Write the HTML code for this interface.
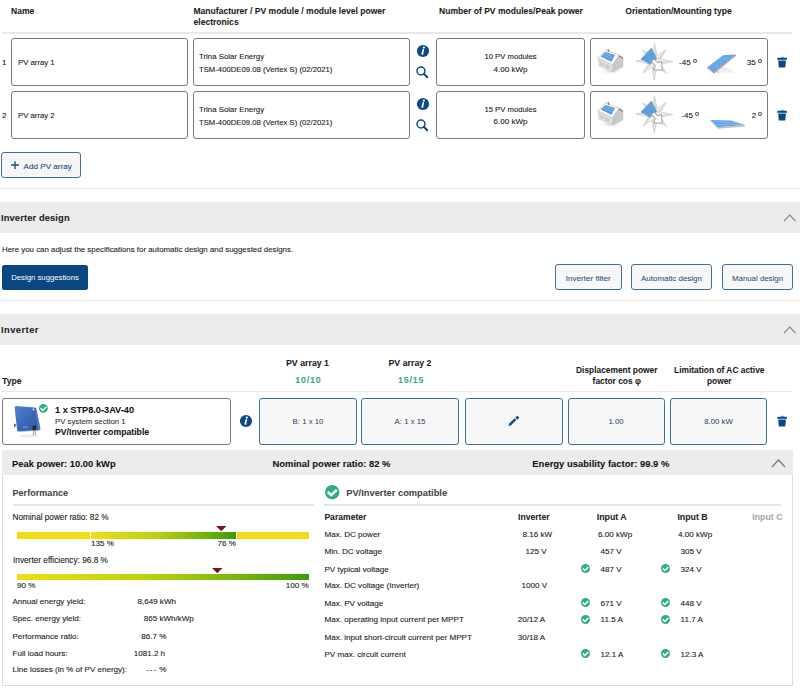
<!DOCTYPE html><html><head><meta charset="utf-8"><style>
html,body{margin:0;padding:0;background:#fff;}
body{width:800px;height:692px;position:relative;overflow:hidden;font-family:"Liberation Sans",sans-serif;}
.t{position:absolute;white-space:nowrap;line-height:1;}
</style></head><body>
<div class="t" style="left:11.00px;top:7.01px;font-size:8.55px;font-weight:700;color:#1a1a1a;-webkit-text-stroke:0.05px currentColor;">Name</div>
<div class="t" style="left:193.50px;top:7.01px;font-size:8.55px;font-weight:700;color:#1a1a1a;-webkit-text-stroke:0.05px currentColor;">Manufacturer / PV module / module level power</div>
<div class="t" style="left:193.50px;top:18.01px;font-size:8.55px;font-weight:700;color:#1a1a1a;-webkit-text-stroke:0.05px currentColor;">electronics</div>
<div class="t" style="left:311.00px;width:400px;text-align:center;top:7.01px;font-size:8.55px;font-weight:700;color:#1a1a1a;-webkit-text-stroke:0.05px currentColor;">Number of PV modules/Peak power</div>
<div class="t" style="left:478.50px;width:400px;text-align:center;top:7.01px;font-size:8.55px;font-weight:700;color:#1a1a1a;-webkit-text-stroke:0.05px currentColor;">Orientation/Mounting type</div>
<div style="position:absolute;left:2px;top:32px;width:790px;height:2px;box-sizing:border-box;background:#e8e8e8;"></div>
<div class="t" style="left:1.90px;top:59.01px;font-size:8px;font-weight:400;color:#1a1a1a;-webkit-text-stroke:0.1px currentColor;">1</div>
<div style="position:absolute;left:11px;top:38px;width:177px;height:48px;box-sizing:border-box;border:1.5px solid #7a7a7a;border-radius:3px;background:#fff;"></div>
<div class="t" style="left:18.00px;top:59.00px;font-size:7.75px;font-weight:400;color:#1a1a1a;-webkit-text-stroke:0.1px currentColor;">PV array 1</div>
<div style="position:absolute;left:193px;top:38px;width:216.5px;height:48px;box-sizing:border-box;border:1.5px solid #7a7a7a;border-radius:3px;background:#fff;"></div>
<div class="t" style="left:199.00px;top:53.01px;font-size:7.85px;font-weight:400;color:#1a1a1a;-webkit-text-stroke:0.1px currentColor;">Trina Solar Energy</div>
<div class="t" style="left:199.00px;top:66.00px;font-size:7.72px;font-weight:400;color:#1a1a1a;-webkit-text-stroke:0.1px currentColor;">TSM-400DE09.08 (Vertex S) (02/2021)</div>
<svg style="position:absolute;left:415px;top:43px" width="16" height="16" viewBox="0 0 16 16"><circle cx="8" cy="8" r="6.1" fill="#0b4a85"/><circle cx="8.85" cy="4.6" r="1.1" fill="#fff"/><path d="M8.3 6.9 L7.35 10.5" stroke="#fff" stroke-width="1.75" stroke-linecap="round"/><path d="M6.6 11.1 H8.4" stroke="#fff" stroke-width="0.9"/></svg>
<svg style="position:absolute;left:414px;top:64px" width="16" height="16" viewBox="0 0 16 16"><circle cx="7" cy="7" r="3.95" fill="none" stroke="#0b4a85" stroke-width="1.5"/><path d="M9.8 9.8 L13.2 13.2" stroke="#0b4a85" stroke-width="2" stroke-linecap="round"/></svg>
<div style="position:absolute;left:436px;top:38px;width:149px;height:48px;box-sizing:border-box;border:1.5px solid #7a7a7a;border-radius:3px;background:#fff;"></div>
<div class="t" style="left:310.50px;width:400px;text-align:center;top:53.01px;font-size:7.7px;font-weight:400;color:#1a1a1a;-webkit-text-stroke:0.1px currentColor;">10 PV modules</div>
<div class="t" style="left:310.50px;width:400px;text-align:center;top:66.01px;font-size:8px;font-weight:400;color:#1a1a1a;-webkit-text-stroke:0.1px currentColor;">4.00 kWp</div>
<div style="position:absolute;left:589.5px;top:38px;width:178.5px;height:48px;box-sizing:border-box;border:1.5px solid #7a7a7a;border-radius:3px;background:#fff;"></div>
<svg style="position:absolute;left:594px;top:44px" width="34" height="32" viewBox="0 0 34 32">
<defs><radialGradient id="hs" cx="0.5" cy="0.5" r="0.5"><stop offset="0" stop-color="#d4d4d4"/><stop offset="1" stop-color="#fff" stop-opacity="0"/></radialGradient></defs>
<ellipse cx="17" cy="27" rx="14" ry="4" fill="url(#hs)"/>
<path d="M4.6 15 L4.8 22 L18.5 27.8 L19.5 20 Z" fill="#e2e2e2" stroke="#bcbcbc" stroke-width="0.45"/>
<path d="M18.5 27.8 L19.5 20 L25.2 11.1 L29 14 L28.7 23.1 Z" fill="#cbcbcb" stroke="#aaa" stroke-width="0.45"/>
<path d="M25.2 11.1 L29.2 13.9 L28.7 15 L24.5 12.5 Z" fill="#8a8a8a"/>
<path d="M3.5 13.9 L11.6 6 L25.2 11.1 L18.5 20.8 Z" fill="#f9f9f9" stroke="#b4b4b4" stroke-width="0.55"/>
<path d="M6.7 12.5 L11.3 7.9 L21 11.1 L17.4 17.8 Z" fill="#5597da"/>
<path d="M8.3 10.9 L18.8 15 M9.9 9.4 L20 13 M9.5 13.5 L13.4 8.6 M12.3 14.6 L16 9.6 M15 15.8 L18.5 10.5" stroke="#a3c9ef" stroke-width="0.45"/>
<path d="M13.6 5 L15.2 5.4 L15.4 8 L13.8 7.6 Z" fill="#7a7a7a"/>
<path d="M6.5 18.5 L9.5 19.6 L9.5 22 L6.5 20.9 Z M11.5 20.4 L15 21.8 L15 24.4 L11.5 23 Z M21.5 21 L24 18 L24 21.5 L21.5 24.5 Z" fill="#d0d0d0" stroke="#b0b0b0" stroke-width="0.35"/>
</svg>
<svg style="position:absolute;left:632px;top:40px" width="44" height="44" viewBox="0 0 44 44">
<path d="M22.60 3.20 L24.91 15.68 L34.30 9.50 L28.32 19.09 L40.70 21.60 L28.32 23.91 L34.60 33.40 L24.91 27.32 L22.20 40.00 L20.09 27.32 L10.80 33.00 L16.68 23.91 L3.80 21.00 L16.68 19.09 L10.50 9.90 L20.09 15.68 Z" fill="#f3f3f3" stroke="#c4c4c4" stroke-width="0.7"/>
<path d="M22.60 3.20 L22.5 21.5 L24.91 15.68 Z M34.30 9.50 L22.5 21.5 L28.32 19.09 Z M40.70 21.60 L22.5 21.5 L28.32 23.91 Z M34.60 33.40 L22.5 21.5 L24.91 27.32 Z M22.20 40.00 L22.5 21.5 L20.09 27.32 Z M10.80 33.00 L22.5 21.5 L16.68 23.91 Z M3.80 21.00 L22.5 21.5 L16.68 19.09 Z M10.50 9.90 L22.5 21.5 L20.09 15.68 Z " fill="#d6d6d6"/>
<path d="M8.9 19.1 L19.4 7.9 L24.8 18.4 L17.8 24.2 Z" fill="#5a9bdc" stroke="#8f9fb3" stroke-width="0.5"/>
<path d="M11 17 L21 10.5 M13 20 L22.5 13.5 M15 22.5 L23.5 16" stroke="#92c0ec" stroke-width="0.4"/>
<path d="M19.4 21.2 L22 19.2 L25.8 22.8 L29.4 21.6 L30.2 30.2 L21.8 30 L23.4 25.6 Z" fill="#ffffff" stroke="#8e8e8e" stroke-width="0.8" stroke-linejoin="round"/>
</svg>
<div class="t" style="left:290.60px;width:400px;text-align:right;top:59.01px;font-size:8px;font-weight:400;color:#1a1a1a;-webkit-text-stroke:0.1px currentColor;">-45</div>
<div style="position:absolute;left:692.70px;top:58.90px;width:4.3px;height:4.2px;box-sizing:border-box;border:0.85px solid #505050;border-radius:50%"></div>
<svg style="position:absolute;left:690px;top:38px" width="80" height="48" viewBox="0 0 80 48">
<defs><linearGradient id="ts" x1="0" y1="0" x2="0" y2="1"><stop offset="0" stop-color="#e6e6e6"/><stop offset="1" stop-color="#f8f8f8"/></linearGradient></defs>
<path d="M24.5 35.6 L33 29 L40 31 L47 35.6 Z" fill="url(#ts)"/>
<path d="M17 29.5 L33 17.2 L45.5 16.5 L23 34.5 Z" fill="#64a4e6"/>
<path d="M19 29.8 L34 18.2 M21 31.5 L39 17.6 M25 27 L30 30.5 M29.5 23.5 L34.5 27 M34 20 L39 23.5" fill="none" stroke="#9ccaf2" stroke-width="0.45"/>
<path d="M23 34.5 L45.5 16.5 L46.2 17.5 L23.8 35.8 Z" fill="#9c9c9c"/>
<path d="M17 29.5 L23 34.5 L23.8 35.8 L16.6 30.2 Z" fill="#c8c8c8"/>
<path d="M27.5 32 L28.8 35.6" stroke="#aaa" stroke-width="0.7"/>
</svg>
<div class="t" style="left:355.60px;width:400px;text-align:right;top:59.01px;font-size:8px;font-weight:400;color:#1a1a1a;-webkit-text-stroke:0.1px currentColor;">35</div>
<div style="position:absolute;left:757.80px;top:58.90px;width:4.3px;height:4.2px;box-sizing:border-box;border:0.85px solid #505050;border-radius:50%"></div>
<svg style="position:absolute;left:776.5px;top:56px" width="11" height="13" viewBox="0 0 11 13"><path d="M3.2 1.6 Q5.5 -0.3 7.8 1.6 Z" fill="#0b4a85"/><rect x="0.3" y="1.8" width="9.6" height="2" fill="#0b4a85"/><path d="M1.2 4.6 H8.9 L8.3 11.6 H1.8 Z" fill="#0b4a85"/></svg>
<div class="t" style="left:1.90px;top:112.01px;font-size:8px;font-weight:400;color:#1a1a1a;-webkit-text-stroke:0.1px currentColor;">2</div>
<div style="position:absolute;left:11px;top:91px;width:177px;height:48px;box-sizing:border-box;border:1.5px solid #7a7a7a;border-radius:3px;background:#fff;"></div>
<div class="t" style="left:18.00px;top:112.00px;font-size:7.75px;font-weight:400;color:#1a1a1a;-webkit-text-stroke:0.1px currentColor;">PV array 2</div>
<div style="position:absolute;left:193px;top:91px;width:216.5px;height:48px;box-sizing:border-box;border:1.5px solid #7a7a7a;border-radius:3px;background:#fff;"></div>
<div class="t" style="left:199.00px;top:106.01px;font-size:7.85px;font-weight:400;color:#1a1a1a;-webkit-text-stroke:0.1px currentColor;">Trina Solar Energy</div>
<div class="t" style="left:199.00px;top:119.00px;font-size:7.72px;font-weight:400;color:#1a1a1a;-webkit-text-stroke:0.1px currentColor;">TSM-400DE09.08 (Vertex S) (02/2021)</div>
<svg style="position:absolute;left:415px;top:96px" width="16" height="16" viewBox="0 0 16 16"><circle cx="8" cy="8" r="6.1" fill="#0b4a85"/><circle cx="8.85" cy="4.6" r="1.1" fill="#fff"/><path d="M8.3 6.9 L7.35 10.5" stroke="#fff" stroke-width="1.75" stroke-linecap="round"/><path d="M6.6 11.1 H8.4" stroke="#fff" stroke-width="0.9"/></svg>
<svg style="position:absolute;left:414px;top:117px" width="16" height="16" viewBox="0 0 16 16"><circle cx="7" cy="7" r="3.95" fill="none" stroke="#0b4a85" stroke-width="1.5"/><path d="M9.8 9.8 L13.2 13.2" stroke="#0b4a85" stroke-width="2" stroke-linecap="round"/></svg>
<div style="position:absolute;left:436px;top:91px;width:149px;height:48px;box-sizing:border-box;border:1.5px solid #7a7a7a;border-radius:3px;background:#fff;"></div>
<div class="t" style="left:310.50px;width:400px;text-align:center;top:106.01px;font-size:7.7px;font-weight:400;color:#1a1a1a;-webkit-text-stroke:0.1px currentColor;">15 PV modules</div>
<div class="t" style="left:310.50px;width:400px;text-align:center;top:118.01px;font-size:8px;font-weight:400;color:#1a1a1a;-webkit-text-stroke:0.1px currentColor;">6.00 kWp</div>
<div style="position:absolute;left:589.5px;top:91px;width:178.5px;height:48px;box-sizing:border-box;border:1.5px solid #7a7a7a;border-radius:3px;background:#fff;"></div>
<svg style="position:absolute;left:594px;top:97px" width="34" height="32" viewBox="0 0 34 32">
<defs><radialGradient id="hs" cx="0.5" cy="0.5" r="0.5"><stop offset="0" stop-color="#d4d4d4"/><stop offset="1" stop-color="#fff" stop-opacity="0"/></radialGradient></defs>
<ellipse cx="17" cy="27" rx="14" ry="4" fill="url(#hs)"/>
<path d="M4.6 15 L4.8 22 L18.5 27.8 L19.5 20 Z" fill="#e2e2e2" stroke="#bcbcbc" stroke-width="0.45"/>
<path d="M18.5 27.8 L19.5 20 L25.2 11.1 L29 14 L28.7 23.1 Z" fill="#cbcbcb" stroke="#aaa" stroke-width="0.45"/>
<path d="M25.2 11.1 L29.2 13.9 L28.7 15 L24.5 12.5 Z" fill="#8a8a8a"/>
<path d="M3.5 13.9 L11.6 6 L25.2 11.1 L18.5 20.8 Z" fill="#f9f9f9" stroke="#b4b4b4" stroke-width="0.55"/>
<path d="M6.7 12.5 L11.3 7.9 L21 11.1 L17.4 17.8 Z" fill="#5597da"/>
<path d="M8.3 10.9 L18.8 15 M9.9 9.4 L20 13 M9.5 13.5 L13.4 8.6 M12.3 14.6 L16 9.6 M15 15.8 L18.5 10.5" stroke="#a3c9ef" stroke-width="0.45"/>
<path d="M13.6 5 L15.2 5.4 L15.4 8 L13.8 7.6 Z" fill="#7a7a7a"/>
<path d="M6.5 18.5 L9.5 19.6 L9.5 22 L6.5 20.9 Z M11.5 20.4 L15 21.8 L15 24.4 L11.5 23 Z M21.5 21 L24 18 L24 21.5 L21.5 24.5 Z" fill="#d0d0d0" stroke="#b0b0b0" stroke-width="0.35"/>
</svg>
<svg style="position:absolute;left:632px;top:93px" width="44" height="44" viewBox="0 0 44 44">
<path d="M22.60 3.20 L24.91 15.68 L34.30 9.50 L28.32 19.09 L40.70 21.60 L28.32 23.91 L34.60 33.40 L24.91 27.32 L22.20 40.00 L20.09 27.32 L10.80 33.00 L16.68 23.91 L3.80 21.00 L16.68 19.09 L10.50 9.90 L20.09 15.68 Z" fill="#f3f3f3" stroke="#c4c4c4" stroke-width="0.7"/>
<path d="M22.60 3.20 L22.5 21.5 L24.91 15.68 Z M34.30 9.50 L22.5 21.5 L28.32 19.09 Z M40.70 21.60 L22.5 21.5 L28.32 23.91 Z M34.60 33.40 L22.5 21.5 L24.91 27.32 Z M22.20 40.00 L22.5 21.5 L20.09 27.32 Z M10.80 33.00 L22.5 21.5 L16.68 23.91 Z M3.80 21.00 L22.5 21.5 L16.68 19.09 Z M10.50 9.90 L22.5 21.5 L20.09 15.68 Z " fill="#d6d6d6"/>
<path d="M8.9 19.1 L19.4 7.9 L24.8 18.4 L17.8 24.2 Z" fill="#5a9bdc" stroke="#8f9fb3" stroke-width="0.5"/>
<path d="M11 17 L21 10.5 M13 20 L22.5 13.5 M15 22.5 L23.5 16" stroke="#92c0ec" stroke-width="0.4"/>
<path d="M19.4 21.2 L22 19.2 L25.8 22.8 L29.4 21.6 L30.2 30.2 L21.8 30 L23.4 25.6 Z" fill="#ffffff" stroke="#8e8e8e" stroke-width="0.8" stroke-linejoin="round"/>
</svg>
<div class="t" style="left:292.90px;width:400px;text-align:right;top:112.01px;font-size:8px;font-weight:400;color:#1a1a1a;-webkit-text-stroke:0.1px currentColor;">-45</div>
<div style="position:absolute;left:695.00px;top:112.10px;width:4.3px;height:4.2px;box-sizing:border-box;border:0.85px solid #505050;border-radius:50%"></div>
<svg style="position:absolute;left:690px;top:90px" width="80" height="50" viewBox="0 0 80 50">
<path d="M20.5 30 L41 30.5 L55 35 L27 37.2 Z" fill="#64a4e6"/>
<path d="M27 37.2 L55 35 L54.6 36.4 L27.6 38.8 Z" fill="#bcbcbc"/>
<path d="M20.5 30 L27 37.2 L27.6 38.8 L20 31 Z" fill="#d2d2d2"/>
<path d="M22.5 31.5 L49 33.2 M25 34.5 L52 34.6" stroke="#a3cdf3" stroke-width="0.45"/>
</svg>
<div class="t" style="left:356.10px;width:400px;text-align:right;top:112.01px;font-size:8px;font-weight:400;color:#1a1a1a;-webkit-text-stroke:0.1px currentColor;">2</div>
<div style="position:absolute;left:757.60px;top:112.10px;width:4.3px;height:4.2px;box-sizing:border-box;border:0.85px solid #505050;border-radius:50%"></div>
<svg style="position:absolute;left:776.5px;top:109px" width="11" height="13" viewBox="0 0 11 13"><path d="M3.2 1.6 Q5.5 -0.3 7.8 1.6 Z" fill="#0b4a85"/><rect x="0.3" y="1.8" width="9.6" height="2" fill="#0b4a85"/><path d="M1.2 4.6 H8.9 L8.3 11.6 H1.8 Z" fill="#0b4a85"/></svg>
<div style="position:absolute;left:1.4px;top:152.2px;width:79.6px;height:25.80000000000001px;box-sizing:border-box;border:1.5px solid #3f6f9c;border-radius:3px;background:#f6f6f7;"></div>
<svg style="position:absolute;left:10px;top:160px" width="10" height="10" viewBox="0 0 10 10"><path d="M5 1.2 V9 M1.2 5 H9" stroke="#1d4f84" stroke-width="1.4"/></svg>
<div class="t" style="left:23.60px;top:163.00px;font-size:8.1px;font-weight:400;color:#1f4675;-webkit-text-stroke:0.1px currentColor;">Add PV array</div>
<div style="position:absolute;left:0px;top:187.5px;width:800px;height:1.5px;box-sizing:border-box;background:#e8e8e8;"></div>
<div style="position:absolute;left:0px;top:202px;width:800px;height:31px;box-sizing:border-box;background:#ececec;"></div>
<div class="t" style="left:1.00px;top:213.01px;font-size:9.4px;font-weight:700;color:#222;-webkit-text-stroke:0.05px currentColor;letter-spacing:0.1px;">Inverter design</div>
<svg style="position:absolute;left:782.5px;top:213.6px" width="13.5" height="8.2" viewBox="0 0 13.5 8.2"><path d="M1 7.2 L6.75 1 L12.5 7.2" fill="none" stroke="#777" stroke-width="1.05"/></svg>
<div class="t" style="left:2.00px;top:246.00px;font-size:7.88px;font-weight:400;color:#222;-webkit-text-stroke:0.1px currentColor;">Here you can adjust the specifications for automatic design and suggested designs.</div>
<div style="position:absolute;left:2px;top:264.5px;width:86px;height:25.0px;box-sizing:border-box;background:#0a467f;border-radius:2.5px;"></div>
<div class="t" style="left:-155.00px;width:400px;text-align:center;top:274.01px;font-size:7.76px;font-weight:400;color:#fff;-webkit-text-stroke:0px currentColor;">Design suggestions</div>
<div style="position:absolute;left:555px;top:264px;width:66.5px;height:26px;box-sizing:border-box;border:1.5px solid #3f6f9c;border-radius:3px;background:#f7f7f8;"></div>
<div class="t" style="left:388.25px;width:400px;text-align:center;top:275.00px;font-size:8.1px;font-weight:400;color:#27507f;-webkit-text-stroke:0.06px currentColor;">Inverter filter</div>
<div style="position:absolute;left:631px;top:264px;width:81px;height:26px;box-sizing:border-box;border:1.5px solid #3f6f9c;border-radius:3px;background:#f7f7f8;"></div>
<div class="t" style="left:471.50px;width:400px;text-align:center;top:275.00px;font-size:7.95px;font-weight:400;color:#27507f;-webkit-text-stroke:0.06px currentColor;">Automatic design</div>
<div style="position:absolute;left:722px;top:264px;width:71px;height:26px;box-sizing:border-box;border:1.5px solid #3f6f9c;border-radius:3px;background:#f7f7f8;"></div>
<div class="t" style="left:557.50px;width:400px;text-align:center;top:275.01px;font-size:7.85px;font-weight:400;color:#27507f;-webkit-text-stroke:0.06px currentColor;">Manual design</div>
<div style="position:absolute;left:0px;top:299.5px;width:800px;height:1.5px;box-sizing:border-box;background:#e8e8e8;"></div>
<div style="position:absolute;left:0px;top:314px;width:800px;height:31px;box-sizing:border-box;background:#ececec;"></div>
<div class="t" style="left:1.00px;top:325.01px;font-size:9.4px;font-weight:700;color:#222;-webkit-text-stroke:0.05px currentColor;letter-spacing:0.44px;">Inverter</div>
<svg style="position:absolute;left:782.5px;top:325.6px" width="13.5" height="8.2" viewBox="0 0 13.5 8.2"><path d="M1 7.2 L6.75 1 L12.5 7.2" fill="none" stroke="#777" stroke-width="1.05"/></svg>
<div class="t" style="left:2.00px;top:377.01px;font-size:8.7px;font-weight:700;color:#1a1a1a;-webkit-text-stroke:0.05px currentColor;">Type</div>
<div class="t" style="left:107.50px;width:400px;text-align:center;top:359.00px;font-size:8.8px;font-weight:700;color:#1a1a1a;-webkit-text-stroke:0.05px currentColor;">PV array 1</div>
<div class="t" style="left:108.30px;width:400px;text-align:center;top:376.00px;font-size:8.8px;font-weight:700;color:#3aaa8c;-webkit-text-stroke:0.05px currentColor;letter-spacing:0.86px;">10/10</div>
<div class="t" style="left:210.00px;width:400px;text-align:center;top:359.00px;font-size:8.8px;font-weight:700;color:#1a1a1a;-webkit-text-stroke:0.05px currentColor;">PV array 2</div>
<div class="t" style="left:211.20px;width:400px;text-align:center;top:376.00px;font-size:8.8px;font-weight:700;color:#3aaa8c;-webkit-text-stroke:0.05px currentColor;letter-spacing:0.86px;">15/15</div>
<div class="t" style="left:416.80px;width:400px;text-align:center;top:366.01px;font-size:8.4px;font-weight:700;color:#1a1a1a;-webkit-text-stroke:0.05px currentColor;">Displacement power</div>
<div class="t" style="left:416.80px;width:400px;text-align:center;top:377.01px;font-size:8.4px;font-weight:700;color:#1a1a1a;-webkit-text-stroke:0.05px currentColor;">factor cos φ</div>
<div class="t" style="left:519.30px;width:400px;text-align:center;top:366.01px;font-size:8.4px;font-weight:700;color:#1a1a1a;-webkit-text-stroke:0.05px currentColor;">Limitation of AC active</div>
<div class="t" style="left:519.30px;width:400px;text-align:center;top:377.01px;font-size:8.4px;font-weight:700;color:#1a1a1a;-webkit-text-stroke:0.05px currentColor;">power</div>
<div style="position:absolute;left:2px;top:390.5px;width:791px;height:1.5px;box-sizing:border-box;background:#e8e8e8;"></div>
<div style="position:absolute;left:2px;top:397.5px;width:229px;height:47.5px;box-sizing:border-box;border:1.5px solid #7a7a7a;border-radius:3px;background:#fff;"></div>
<svg style="position:absolute;left:12.5px;top:405px" width="30" height="34" viewBox="0 0 30 34">
<defs><linearGradient id="ig" x1="0" y1="0" x2="1" y2="1"><stop offset="0" stop-color="#5283d2"/><stop offset="0.5" stop-color="#3c68b8"/><stop offset="1" stop-color="#2f5aa6"/></linearGradient></defs>
<ellipse cx="16" cy="31" rx="10" ry="1.4" fill="#ececec"/>
<path d="M1.6 2.6 Q1.6 0.9 3.4 1 L21.6 2.4 Q23.2 2.6 23.5 4.2 L27.3 23.6 Q27.6 25.1 26 25.3 L5.8 26.5 Q4.3 26.6 4.1 25 Z" fill="url(#ig)"/>
<path d="M23.5 4.2 L27.3 23.6 Q27.6 25.1 26 25.3 L25.2 25.3 L22.4 4 Z" fill="#5d8ad6" opacity="0.7"/>
<path d="M4.1 25 L5.8 26.5 L26 25.3" fill="none" stroke="#8fb0e6" stroke-width="0.6"/>
<rect x="19.6" y="20.6" width="3.4" height="4.6" fill="#2a2a2a"/>
<path d="M20.6 25 L20.4 30.5 M22 25 L22.6 30" stroke="#777" stroke-width="0.7"/>
<rect x="1.2" y="18.8" width="1.3" height="3" fill="#2a2a2a"/>
<rect x="10" y="21.6" width="4.5" height="1" fill="#8aa6d8"/>
<circle cx="20.5" cy="4.6" r="1" fill="#d5e2f5"/>
</svg>
<svg style="position:absolute;left:37.6px;top:402.90000000000003px" width="10.8" height="10.8" viewBox="0 0 10.8 10.8"><circle cx="5.4" cy="5.4" r="4.4" fill="#2fae82"/><path d="M2.6500000000000004 5.277777777777779 L4.78888888888889 7.233333333333334 L8.211111111111112 3.9333333333333336" fill="none" stroke="#fff" stroke-width="1.4666666666666668"/></svg>
<div class="t" style="left:55.00px;top:406.01px;font-size:9.2px;font-weight:700;color:#111;-webkit-text-stroke:0.05px currentColor;">1 x STP8.0-3AV-40</div>
<div class="t" style="left:55.00px;top:418.01px;font-size:7.8px;font-weight:400;color:#333;-webkit-text-stroke:0.1px currentColor;">PV system section 1</div>
<div class="t" style="left:55.00px;top:428.01px;font-size:8.7px;font-weight:700;color:#111;-webkit-text-stroke:0.05px currentColor;">PV/Inverter compatible</div>
<svg style="position:absolute;left:237.6px;top:413.2px" width="16" height="16" viewBox="0 0 16 16"><circle cx="8" cy="8" r="6.1" fill="#0b4a85"/><circle cx="8.85" cy="4.6" r="1.1" fill="#fff"/><path d="M8.3 6.9 L7.35 10.5" stroke="#fff" stroke-width="1.75" stroke-linecap="round"/><path d="M6.6 11.1 H8.4" stroke="#fff" stroke-width="0.9"/></svg>
<div style="position:absolute;left:259px;top:397.5px;width:98px;height:47.0px;box-sizing:border-box;border:1.5px solid #3f6f9c;border-radius:3px;background:#f7f7f8;"></div>
<div class="t" style="left:108.00px;width:400px;text-align:center;top:418.01px;font-size:7.8px;font-weight:400;color:#27466b;-webkit-text-stroke:0.03px currentColor;">B: 1 x 10</div>
<div style="position:absolute;left:361px;top:397.5px;width:98px;height:47.0px;box-sizing:border-box;border:1.5px solid #3f6f9c;border-radius:3px;background:#f7f7f8;"></div>
<div class="t" style="left:210.00px;width:400px;text-align:center;top:418.01px;font-size:7.8px;font-weight:400;color:#27466b;-webkit-text-stroke:0.03px currentColor;">A: 1 x 15</div>
<div style="position:absolute;left:465px;top:397.5px;width:97.5px;height:47.0px;box-sizing:border-box;border:1.5px solid #3f6f9c;border-radius:3px;background:#f7f7f8;"></div>
<div style="position:absolute;left:567.5px;top:397.5px;width:97.0px;height:47.0px;box-sizing:border-box;border:1.5px solid #3f6f9c;border-radius:3px;background:#f7f7f8;"></div>
<div class="t" style="left:416.00px;width:400px;text-align:center;top:418.01px;font-size:7.8px;font-weight:400;color:#27466b;-webkit-text-stroke:0.03px currentColor;">1.00</div>
<div style="position:absolute;left:670px;top:397.5px;width:97px;height:47.0px;box-sizing:border-box;border:1.5px solid #3f6f9c;border-radius:3px;background:#f7f7f8;"></div>
<div class="t" style="left:518.50px;width:400px;text-align:center;top:418.01px;font-size:7.8px;font-weight:400;color:#27466b;-webkit-text-stroke:0.03px currentColor;">8.00 kW</div>
<svg style="position:absolute;left:506px;top:413px" width="16" height="16" viewBox="0 0 16 16"><path d="M2.6 13 L3.3 10.6 L8.6 5.3 L10.3 7 L5 12.3 Z" fill="#0b4a85"/><path d="M9.3 4.6 L10.6 3.3 Q11.3 2.7 11.9 3.3 L12.7 4.1 Q13.3 4.7 12.7 5.4 L11.4 6.7 Z" fill="#0b4a85"/></svg>
<svg style="position:absolute;left:776.8px;top:415px" width="11" height="13" viewBox="0 0 11 13"><path d="M3.2 1.6 Q5.5 -0.3 7.8 1.6 Z" fill="#0b4a85"/><rect x="0.3" y="1.8" width="9.6" height="2" fill="#0b4a85"/><path d="M1.2 4.6 H8.9 L8.3 11.6 H1.8 Z" fill="#0b4a85"/></svg>
<div style="position:absolute;left:2px;top:474px;width:790.5px;height:211.5px;box-sizing:border-box;border:1px solid #dedede;border-top:none;background:#fff;"></div>
<div style="position:absolute;left:2px;top:450px;width:790.5px;height:24.5px;box-sizing:border-box;background:#ececec;"></div>
<div class="t" style="left:12.00px;top:459.01px;font-size:9.4px;font-weight:700;color:#111;-webkit-text-stroke:0.05px currentColor;">Peak power: 10.00 kWp</div>
<div class="t" style="left:272.50px;top:459.00px;font-size:9.45px;font-weight:700;color:#111;-webkit-text-stroke:0.05px currentColor;">Nominal power ratio: 82 %</div>
<div class="t" style="left:532.30px;top:459.01px;font-size:9.46px;font-weight:700;color:#111;-webkit-text-stroke:0.05px currentColor;">Energy usability factor: 99.9 %</div>
<svg style="position:absolute;left:770.5px;top:458.5px" width="15" height="9" viewBox="0 0 15 9"><path d="M1 8 L7.5 1 L14 8" fill="none" stroke="#777" stroke-width="1.2"/></svg>
<div class="t" style="left:12.50px;top:489.00px;font-size:9.1px;font-weight:700;color:#444;-webkit-text-stroke:0.05px currentColor;">Performance</div>
<div style="position:absolute;left:12.5px;top:503.5px;width:301.5px;height:2.0px;box-sizing:border-box;background:#e4e4e4;"></div>
<div class="t" style="left:12.50px;top:514.01px;font-size:8.2px;font-weight:400;color:#1a1a1a;-webkit-text-stroke:0.1px currentColor;">Nominal power ratio: 82 %</div>
<div style="position:absolute;left:17px;top:532.4px;width:72.6px;height:6.399999999999977px;box-sizing:border-box;background:#f2dd14;"></div>
<div style="position:absolute;left:91px;top:532.4px;width:145px;height:6.399999999999977px;box-sizing:border-box;background:linear-gradient(90deg,#efe012 0%,#b9d20f 45%,#6db30c 80%,#3e9a0a 100%);"></div>
<div style="position:absolute;left:237px;top:532.4px;width:71.80000000000001px;height:6.399999999999977px;box-sizing:border-box;background:#f2dd14;"></div>
<svg style="position:absolute;left:216px;top:526px" width="11" height="6" viewBox="0 0 11 6"><path d="M0 0 H10.5 L5.25 5.2 Z" fill="#7b1518"/></svg>
<div class="t" style="left:91.00px;top:540.00px;font-size:8.1px;font-weight:400;color:#1a1a1a;-webkit-text-stroke:0.1px currentColor;">135 %</div>
<div class="t" style="left:-164.00px;width:400px;text-align:right;top:540.00px;font-size:8.1px;font-weight:400;color:#1a1a1a;-webkit-text-stroke:0.1px currentColor;">76 %</div>
<div class="t" style="left:13.00px;top:557.00px;font-size:8.27px;font-weight:400;color:#1a1a1a;-webkit-text-stroke:0.1px currentColor;">Inverter efficiency: 96.8 %</div>
<div style="position:absolute;left:17px;top:573.6px;width:291.8px;height:6.399999999999977px;box-sizing:border-box;background:linear-gradient(90deg,#efe012 0%,#b9d20f 45%,#6db30c 80%,#3e9a0a 100%);"></div>
<svg style="position:absolute;left:212px;top:567.6px" width="11" height="6" viewBox="0 0 11 6"><path d="M0 0 H10.5 L5.25 5.2 Z" fill="#7b1518"/></svg>
<div class="t" style="left:17.00px;top:582.00px;font-size:8.1px;font-weight:400;color:#1a1a1a;-webkit-text-stroke:0.1px currentColor;">90 %</div>
<div class="t" style="left:-91.20px;width:400px;text-align:right;top:582.00px;font-size:8.1px;font-weight:400;color:#1a1a1a;-webkit-text-stroke:0.1px currentColor;">100 %</div>
<div class="t" style="left:12.50px;top:598.00px;font-size:8.05px;font-weight:400;color:#1a1a1a;-webkit-text-stroke:0.1px currentColor;">Annual energy yield:</div>
<div class="t" style="left:137.50px;top:598.00px;font-size:8.05px;font-weight:400;color:#1a1a1a;-webkit-text-stroke:0.1px currentColor;">8,649 kWh</div>
<div class="t" style="left:12.50px;top:615.00px;font-size:8.05px;font-weight:400;color:#1a1a1a;-webkit-text-stroke:0.1px currentColor;">Spec. energy yield:</div>
<div class="t" style="left:143.75px;top:615.00px;font-size:8.05px;font-weight:400;color:#1a1a1a;-webkit-text-stroke:0.1px currentColor;">865 kWh/kWp</div>
<div class="t" style="left:12.50px;top:633.00px;font-size:8.05px;font-weight:400;color:#1a1a1a;-webkit-text-stroke:0.1px currentColor;">Performance ratio:</div>
<div class="t" style="left:141.25px;top:633.00px;font-size:8.05px;font-weight:400;color:#1a1a1a;-webkit-text-stroke:0.1px currentColor;">86.7 %</div>
<div class="t" style="left:12.50px;top:650.00px;font-size:8.05px;font-weight:400;color:#1a1a1a;-webkit-text-stroke:0.1px currentColor;">Full load hours:</div>
<div class="t" style="left:133.75px;top:650.00px;font-size:8.05px;font-weight:400;color:#1a1a1a;-webkit-text-stroke:0.1px currentColor;">1081.2 h</div>
<div class="t" style="left:12.50px;top:666.00px;font-size:8.05px;font-weight:400;color:#1a1a1a;-webkit-text-stroke:0.1px currentColor;">Line losses (in % of PV energy):</div>
<div class="t" style="left:146.25px;top:666.00px;font-size:8.05px;font-weight:400;color:#1a1a1a;-webkit-text-stroke:0.1px currentColor;"><span style="letter-spacing:0.9px">---</span> %</div>
<svg style="position:absolute;left:323.8px;top:484.3px" width="16.4" height="16.4" viewBox="0 0 16.4 16.4"><circle cx="8.2" cy="8.2" r="7.2" fill="#2fae82"/><path d="M3.6999999999999993 7.999999999999999 L7.199999999999999 11.2 L12.799999999999999 5.799999999999999" fill="none" stroke="#fff" stroke-width="2.4"/></svg>
<div class="t" style="left:346.20px;top:489.00px;font-size:9.32px;font-weight:700;color:#444;-webkit-text-stroke:0.05px currentColor;">PV/Inverter compatible</div>
<div style="position:absolute;left:323.6px;top:503.5px;width:457.4px;height:2.0px;box-sizing:border-box;background:#e4e4e4;"></div>
<div class="t" style="left:324.40px;top:513.00px;font-size:8.6px;font-weight:700;color:#222;-webkit-text-stroke:0.05px currentColor;">Parameter</div>
<div class="t" style="left:518.00px;top:513.00px;font-size:8.6px;font-weight:700;color:#222;-webkit-text-stroke:0.05px currentColor;">Inverter</div>
<div class="t" style="left:596.70px;top:513.00px;font-size:8.8px;font-weight:700;color:#222;-webkit-text-stroke:0.05px currentColor;">Input A</div>
<div class="t" style="left:677.40px;top:513.00px;font-size:8.8px;font-weight:700;color:#222;-webkit-text-stroke:0.05px currentColor;">Input B</div>
<div class="t" style="left:752.30px;top:513.00px;font-size:8.8px;font-weight:700;color:#aaa;-webkit-text-stroke:0.05px currentColor;">Input C</div>
<div class="t" style="left:324.40px;top:531.00px;font-size:8.1px;font-weight:400;color:#1a1a1a;-webkit-text-stroke:0.1px currentColor;">Max. DC power</div>
<div class="t" style="left:522.50px;top:531.00px;font-size:8.1px;font-weight:400;color:#1a1a1a;-webkit-text-stroke:0.1px currentColor;">8.16 kW</div>
<div class="t" style="left:598.00px;top:531.00px;font-size:8.1px;font-weight:400;color:#1a1a1a;-webkit-text-stroke:0.1px currentColor;">6.00 kWp</div>
<div class="t" style="left:678.00px;top:531.00px;font-size:8.1px;font-weight:400;color:#1a1a1a;-webkit-text-stroke:0.1px currentColor;">4.00 kWp</div>
<div class="t" style="left:324.40px;top:548.00px;font-size:8.1px;font-weight:400;color:#1a1a1a;-webkit-text-stroke:0.1px currentColor;">Min. DC voltage</div>
<div class="t" style="left:525.50px;top:548.00px;font-size:8.1px;font-weight:400;color:#1a1a1a;-webkit-text-stroke:0.1px currentColor;">125 V</div>
<div class="t" style="left:600.50px;top:548.00px;font-size:8.1px;font-weight:400;color:#1a1a1a;-webkit-text-stroke:0.1px currentColor;">457 V</div>
<div class="t" style="left:680.50px;top:548.00px;font-size:8.1px;font-weight:400;color:#1a1a1a;-webkit-text-stroke:0.1px currentColor;">305 V</div>
<div class="t" style="left:324.40px;top:566.00px;font-size:8.1px;font-weight:400;color:#1a1a1a;-webkit-text-stroke:0.1px currentColor;">PV typical voltage</div>
<div class="t" style="left:600.50px;top:566.00px;font-size:8.1px;font-weight:400;color:#1a1a1a;-webkit-text-stroke:0.1px currentColor;">487 V</div>
<svg style="position:absolute;left:580.0px;top:563.0px" width="11.0" height="11.0" viewBox="0 0 11.0 11.0"><circle cx="5.5" cy="5.5" r="4.5" fill="#2fae82"/><path d="M2.6875 5.375 L4.875 7.375 L8.375 4.0" fill="none" stroke="#fff" stroke-width="1.5"/></svg>
<div class="t" style="left:680.50px;top:566.00px;font-size:8.1px;font-weight:400;color:#1a1a1a;-webkit-text-stroke:0.1px currentColor;">324 V</div>
<svg style="position:absolute;left:659.9px;top:563.0px" width="11.0" height="11.0" viewBox="0 0 11.0 11.0"><circle cx="5.5" cy="5.5" r="4.5" fill="#2fae82"/><path d="M2.6875 5.375 L4.875 7.375 L8.375 4.0" fill="none" stroke="#fff" stroke-width="1.5"/></svg>
<div class="t" style="left:324.40px;top:582.00px;font-size:8.1px;font-weight:400;color:#1a1a1a;-webkit-text-stroke:0.1px currentColor;">Max. DC voltage (Inverter)</div>
<div class="t" style="left:521.60px;top:582.00px;font-size:8.1px;font-weight:400;color:#1a1a1a;-webkit-text-stroke:0.1px currentColor;">1000 V</div>
<div class="t" style="left:324.40px;top:600.00px;font-size:8.1px;font-weight:400;color:#1a1a1a;-webkit-text-stroke:0.1px currentColor;">Max. PV voltage</div>
<div class="t" style="left:600.50px;top:600.00px;font-size:8.1px;font-weight:400;color:#1a1a1a;-webkit-text-stroke:0.1px currentColor;">671 V</div>
<svg style="position:absolute;left:580.0px;top:596.9px" width="11.0" height="11.0" viewBox="0 0 11.0 11.0"><circle cx="5.5" cy="5.5" r="4.5" fill="#2fae82"/><path d="M2.6875 5.375 L4.875 7.375 L8.375 4.0" fill="none" stroke="#fff" stroke-width="1.5"/></svg>
<div class="t" style="left:680.50px;top:600.00px;font-size:8.1px;font-weight:400;color:#1a1a1a;-webkit-text-stroke:0.1px currentColor;">448 V</div>
<svg style="position:absolute;left:659.9px;top:596.9px" width="11.0" height="11.0" viewBox="0 0 11.0 11.0"><circle cx="5.5" cy="5.5" r="4.5" fill="#2fae82"/><path d="M2.6875 5.375 L4.875 7.375 L8.375 4.0" fill="none" stroke="#fff" stroke-width="1.5"/></svg>
<div class="t" style="left:324.40px;top:616.00px;font-size:8.1px;font-weight:400;color:#1a1a1a;-webkit-text-stroke:0.1px currentColor;">Max. operating input current per MPPT</div>
<div class="t" style="left:517.80px;top:616.00px;font-size:8.1px;font-weight:400;color:#1a1a1a;-webkit-text-stroke:0.1px currentColor;">20/12 A</div>
<div class="t" style="left:600.50px;top:616.00px;font-size:8.1px;font-weight:400;color:#1a1a1a;-webkit-text-stroke:0.1px currentColor;">11.5 A</div>
<svg style="position:absolute;left:580.0px;top:613.8px" width="11.0" height="11.0" viewBox="0 0 11.0 11.0"><circle cx="5.5" cy="5.5" r="4.5" fill="#2fae82"/><path d="M2.6875 5.375 L4.875 7.375 L8.375 4.0" fill="none" stroke="#fff" stroke-width="1.5"/></svg>
<div class="t" style="left:680.50px;top:616.00px;font-size:8.1px;font-weight:400;color:#1a1a1a;-webkit-text-stroke:0.1px currentColor;">11.7 A</div>
<svg style="position:absolute;left:659.9px;top:613.8px" width="11.0" height="11.0" viewBox="0 0 11.0 11.0"><circle cx="5.5" cy="5.5" r="4.5" fill="#2fae82"/><path d="M2.6875 5.375 L4.875 7.375 L8.375 4.0" fill="none" stroke="#fff" stroke-width="1.5"/></svg>
<div class="t" style="left:324.40px;top:634.00px;font-size:8.1px;font-weight:400;color:#1a1a1a;-webkit-text-stroke:0.1px currentColor;">Max. input short-circuit current per MPPT</div>
<div class="t" style="left:517.80px;top:634.00px;font-size:8.1px;font-weight:400;color:#1a1a1a;-webkit-text-stroke:0.1px currentColor;">30/18 A</div>
<div class="t" style="left:324.40px;top:651.00px;font-size:8.1px;font-weight:400;color:#1a1a1a;-webkit-text-stroke:0.1px currentColor;">PV max. circuit current</div>
<div class="t" style="left:600.50px;top:651.00px;font-size:8.1px;font-weight:400;color:#1a1a1a;-webkit-text-stroke:0.1px currentColor;">12.1 A</div>
<svg style="position:absolute;left:580.0px;top:648.3px" width="11.0" height="11.0" viewBox="0 0 11.0 11.0"><circle cx="5.5" cy="5.5" r="4.5" fill="#2fae82"/><path d="M2.6875 5.375 L4.875 7.375 L8.375 4.0" fill="none" stroke="#fff" stroke-width="1.5"/></svg>
<div class="t" style="left:680.50px;top:651.00px;font-size:8.1px;font-weight:400;color:#1a1a1a;-webkit-text-stroke:0.1px currentColor;">12.3 A</div>
<svg style="position:absolute;left:659.9px;top:648.3px" width="11.0" height="11.0" viewBox="0 0 11.0 11.0"><circle cx="5.5" cy="5.5" r="4.5" fill="#2fae82"/><path d="M2.6875 5.375 L4.875 7.375 L8.375 4.0" fill="none" stroke="#fff" stroke-width="1.5"/></svg>
</body></html>
